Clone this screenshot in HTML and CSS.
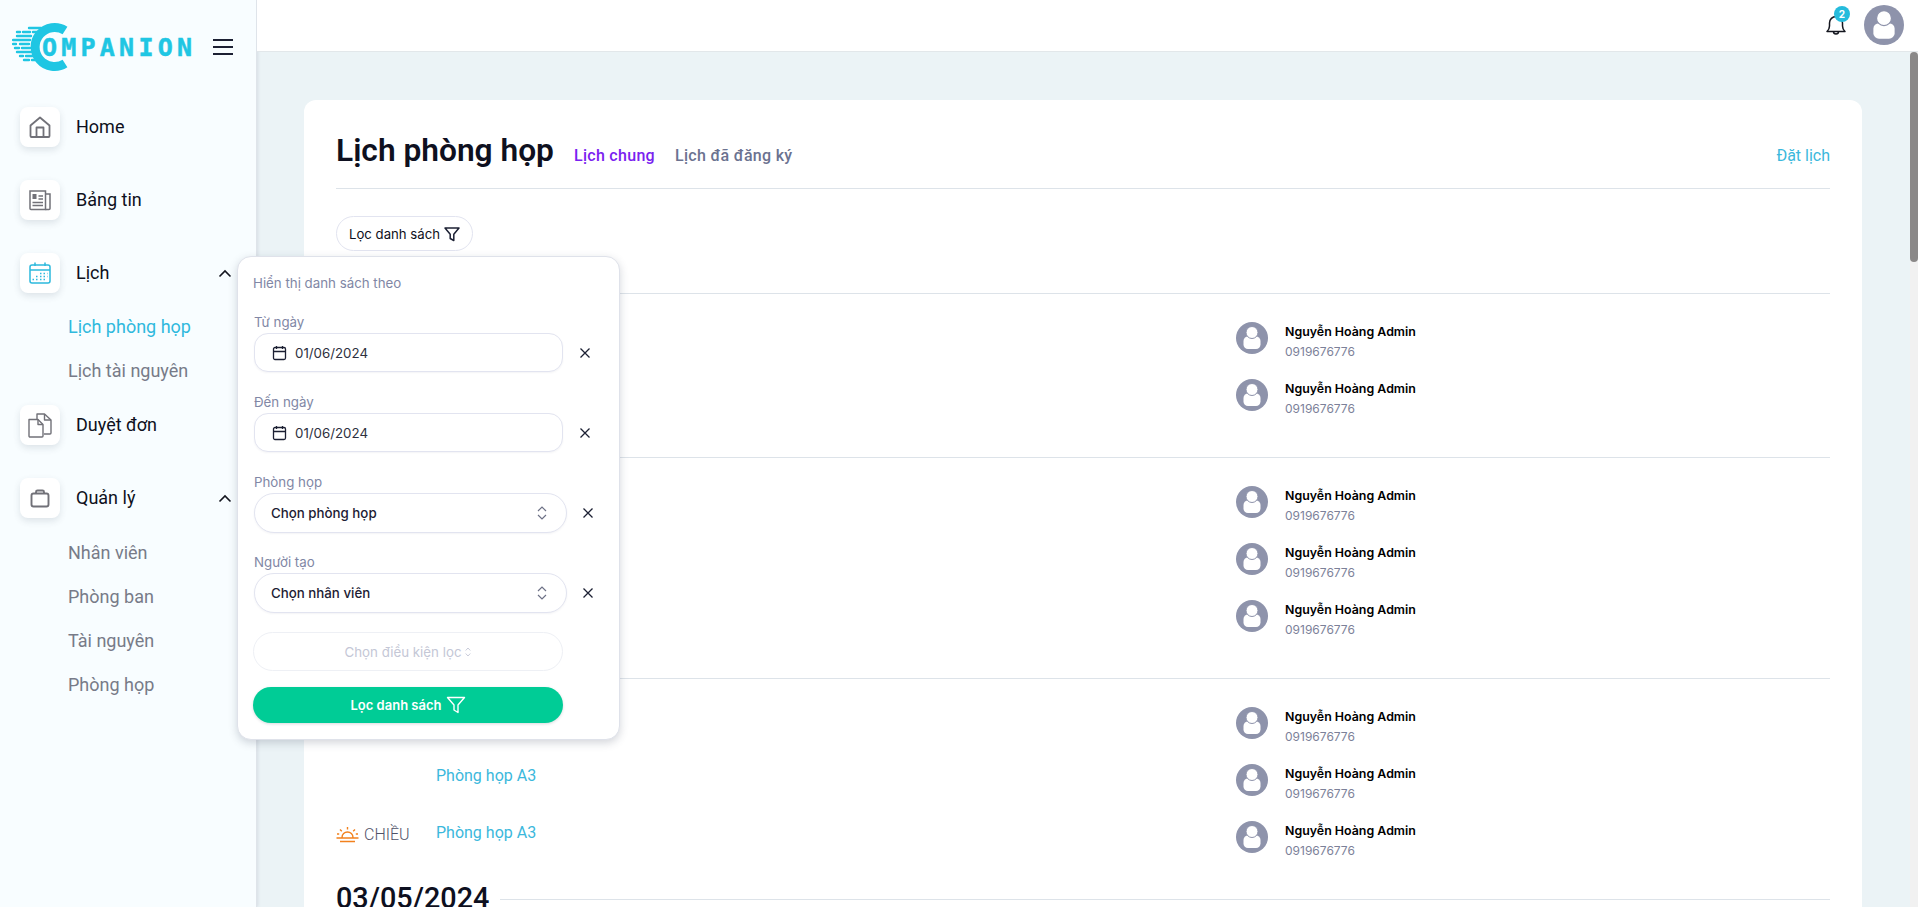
FILE: index.html
```html
<!DOCTYPE html>
<html lang="vi">
<head>
<meta charset="utf-8">
<title>Lịch phòng họp</title>
<link rel="stylesheet" href="styles.css">
</head>
<body>
<div class="shell">
  <aside class="sidebar">
    <div class="brand">
      <svg class="logo" width="184" height="52" viewBox="0 0 184 52">
        <path d="M53 9.500 A19.500 19.500 0 1 0 53 42.500" fill="none" stroke="#1fc6e3" stroke-width="9"/>
        <g stroke="#1fc6e3" stroke-width="2.400" stroke-linecap="round">
          <path d="M17 7h12M5 11h3M11 11h7M21 11h5M5 15h14M1 19h17M1 23h3M8 23h9M3 27h4M10 27h8M5 31h14M8 35h3M14 35h9M12 39h5M20 39h8"/>
        </g>
        <text x="30" y="35" class="logo-text" textLength="150" lengthAdjust="spacing">OMPANION</text>
      </svg>
      <svg class="burger" width="22" height="18" viewBox="0 0 22 18"><path d="M1 2h20M1 9h20M1 16h20" stroke="#1c2033" stroke-width="2" fill="none"/></svg>
    </div>
    <nav class="nav">
      <div class="nav-row">
        <span class="tile"><svg width="24" height="24" viewBox="0 0 24 24" fill="none" stroke="#717178" stroke-width="1.800" stroke-linejoin="round"><path d="M2.500 10.500 12 2.500l9.500 8v10.500a1 1 0 0 1-1 1h-17a1 1 0 0 1-1-1z"/><path d="M8.500 22v-9.500h7V22"/></svg></span>
        <span class="nav-label">Home</span>
      </div>
      <div class="nav-row">
        <span class="tile"><svg width="24" height="24" viewBox="0 0 24 24" fill="none" stroke="#717178" stroke-width="1.500"><path d="M2 3h15.500v18.500H3a1 1 0 0 1-1-1z"/><path d="M17.500 6H22v14.500a1 1 0 0 1-1 1h-3.500"/><path d="M10.500 8h4.500M10.500 11h4.500M4.500 14.500h10.500M4.500 17.500h10.500"/><rect x="4.500" y="6" width="4" height="5" fill="#717178" stroke="none"/></svg></span>
        <span class="nav-label">Bảng tin</span>
      </div>
      <div class="nav-row nav-open">
        <span class="tile"><svg width="24" height="24" viewBox="0 0 24 24" fill="none" stroke="#2db9dd" stroke-width="1.500"><rect x="2" y="4" width="20" height="18" rx="2"/><path d="M2 9h20M7 1.500V5M17 1.500V5"/><path d="M12 12.500h1.500M15.500 12.500h1.500M19 12.500h.5M8 15.500h1.500M12 15.500h1.500M15.500 15.500h1.500M19 15.500h.5M4.500 18.500h1.500M8 18.500h1.500M12 18.500h1.500M15.500 18.500h1.500" stroke-width="1.700"/></svg></span>
        <span class="nav-label">Lịch</span>
        <svg class="chev" width="14" height="9" viewBox="0 0 14 9"><path d="M1.500 7.500 7 2l5.500 5.500" fill="none" stroke="#14161f" stroke-width="1.600"/></svg>
      </div>
      <div class="sub sub-gap">
        <a class="sub-item sub-active">Lịch phòng họp</a>
        <a class="sub-item">Lịch tài nguyên</a>
      </div>
      <div class="nav-row">
        <span class="tile"><svg width="26" height="26" viewBox="0 0 26 26" fill="none" stroke="#717178" stroke-width="1.400" stroke-linejoin="round"><path d="M2 7.500h9l5 5v11.500a1 1 0 0 1-1 1H3a1 1 0 0 1-1-1z"/><path d="M11 7.500v5h5"/><path d="M10 7V2h7.500l6.500 6v13a1 1 0 0 1-1 1h-6"/><path d="M17.500 2v6h6.500"/></svg></span>
        <span class="nav-label">Duyệt đơn</span>
      </div>
      <div class="nav-row nav-open">
        <span class="tile"><svg width="24" height="24" viewBox="0 0 24 24" fill="none" stroke="#717178" stroke-width="1.900"><rect x="3.500" y="7.500" width="17" height="13" rx="2"/><path d="M8 7.500V6a1.500 1.500 0 0 1 1.500-1.500h5A1.500 1.500 0 0 1 16 6v1.500"/></svg></span>
        <span class="nav-label">Quản lý</span>
        <svg class="chev" width="14" height="9" viewBox="0 0 14 9"><path d="M1.500 7.500 7 2l5.500 5.500" fill="none" stroke="#14161f" stroke-width="1.600"/></svg>
      </div>
      <div class="sub sub-low">
        <a class="sub-item">Nhân viên</a>
        <a class="sub-item">Phòng ban</a>
        <a class="sub-item">Tài nguyên</a>
        <a class="sub-item">Phòng họp</a>
      </div>
    </nav>
  </aside>

  <div class="right">
    <header class="topbar">
      <span class="bell">
        <svg width="22" height="24" viewBox="0 0 22 24" fill="none" stroke="#14161f" stroke-width="1.500" stroke-linejoin="round"><path d="M2 18.500c1.800-1.700 2.500-3 2.500-5.500V10a6.500 6.500 0 0 1 13 0v3c0 2.500.7 3.800 2.500 5.500z"/><path d="M8.500 18.500a2.500 2.500 0 0 0 5 0"/></svg>
        <span class="badge">2</span>
      </span>
      <svg class="avatar-top" width="40" height="40" viewBox="0 0 32 32"><circle cx="16" cy="16" r="16" fill="#8e93ab"/><rect x="7.500" y="14.500" width="17" height="12.500" rx="4.500" fill="#fff"/><circle cx="16" cy="10.500" r="6" fill="#fff" stroke="#8e93ab" stroke-width="1"/></svg>
    </header>
    <div class="below">
      <main class="main">
        <section class="card">
          <div class="card-head">
            <h1 class="title">Lịch phòng họp</h1>
            <a class="tab tab-active">Lịch chung</a>
            <a class="tab">Lịch đã đăng ký</a>
            <a class="book">Đặt lịch</a>
          </div>

          <div class="filter-wrap">
            <button class="filter-btn">Lọc danh sách
              <svg width="18" height="18" viewBox="0 0 18 18" fill="none" stroke="#1c2033" stroke-width="1.500" stroke-linejoin="round"><path d="M2 3h14l-5.200 6.300V15.500l-3.600-2V9.300z"/></svg>
            </button>
            <div class="popup">
              <div class="pop-head">Hiển thị danh sách theo</div>
              <label class="pop-label">Từ ngày</label>
              <div class="pop-row">
                <div class="date-input">
                  <svg width="15" height="16" viewBox="0 0 15 16" fill="none" stroke="#1c2033" stroke-width="1.300"><rect x="1.500" y="2.500" width="12" height="12" rx="1.500"/><path d="M1.500 6.500h12M4.500 1v3M10.500 1v3"/></svg>
                  <span>01/06/2024</span>
                </div>
                <svg class="clear" width="12" height="12" viewBox="0 0 12 12"><path d="M1.500 1.500l9 9M10.500 1.500l-9 9" stroke="#1c2033" stroke-width="1.300"/></svg>
              </div>
              <label class="pop-label">Đến ngày</label>
              <div class="pop-row">
                <div class="date-input">
                  <svg width="15" height="16" viewBox="0 0 15 16" fill="none" stroke="#1c2033" stroke-width="1.300"><rect x="1.500" y="2.500" width="12" height="12" rx="1.500"/><path d="M1.500 6.500h12M4.500 1v3M10.500 1v3"/></svg>
                  <span>01/06/2024</span>
                </div>
                <svg class="clear" width="12" height="12" viewBox="0 0 12 12"><path d="M1.500 1.500l9 9M10.500 1.500l-9 9" stroke="#1c2033" stroke-width="1.300"/></svg>
              </div>
              <label class="pop-label">Phòng họp</label>
              <div class="pop-row pop-row-tight">
                <div class="select">
                  <span>Chọn phòng họp</span>
                  <svg width="10" height="14" viewBox="0 0 10 14" fill="none" stroke="#6d7186" stroke-width="1.200"><path d="M1 5l4-4 4 4M1 9l4 4 4-4"/></svg>
                </div>
                <svg class="clear clear-sel" width="12" height="12" viewBox="0 0 12 12"><path d="M1.500 1.500l9 9M10.500 1.500l-9 9" stroke="#1c2033" stroke-width="1.300"/></svg>
              </div>
              <label class="pop-label">Người tạo</label>
              <div class="pop-row pop-row-tight">
                <div class="select">
                  <span>Chọn nhân viên</span>
                  <svg width="10" height="14" viewBox="0 0 10 14" fill="none" stroke="#6d7186" stroke-width="1.200"><path d="M1 5l4-4 4 4M1 9l4 4 4-4"/></svg>
                </div>
                <svg class="clear clear-sel" width="12" height="12" viewBox="0 0 12 12"><path d="M1.500 1.500l9 9M10.500 1.500l-9 9" stroke="#1c2033" stroke-width="1.300"/></svg>
              </div>
              <div class="cond">
                <span>Chọn điều kiện lọc</span>
                <svg width="6" height="10" viewBox="0 0 6 10" fill="none" stroke="#c9ccda" stroke-width="1"><path d="M.7 3.500 3 1l2.300 2.500M.7 6.500 3 9l2.300-2.500"/></svg>
              </div>
              <button class="apply">Lọc danh sách
                <svg width="20" height="20" viewBox="0 0 20 20" fill="none" stroke="#fff" stroke-width="1.400" stroke-linejoin="round"><path d="M1.500 2.500h17l-6.500 7.500v7.500l-4-2.500V10z"/></svg>
              </button>
            </div>
          </div>

          <div class="day day-first">
            <div class="day-head"><span class="day-line"></span></div>
            <div class="row"><span class="sess"></span><span></span><div class="person"><svg class="ava" width="32" height="32" viewBox="0 0 32 32"><circle cx="16" cy="16" r="16" fill="#8e93ab"/><rect x="7.500" y="14.500" width="17" height="12.500" rx="4.500" fill="#fff"/><circle cx="16" cy="10.500" r="6" fill="#fff" stroke="#8e93ab" stroke-width="1"/></svg><div class="pinfo"><div class="pname">Nguyễn Hoàng Admin</div><div class="pphone">0919676776</div></div></div></div>
            <div class="row"><span class="sess"></span><span></span><div class="person"><svg class="ava" width="32" height="32" viewBox="0 0 32 32"><circle cx="16" cy="16" r="16" fill="#8e93ab"/><rect x="7.500" y="14.500" width="17" height="12.500" rx="4.500" fill="#fff"/><circle cx="16" cy="10.500" r="6" fill="#fff" stroke="#8e93ab" stroke-width="1"/></svg><div class="pinfo"><div class="pname">Nguyễn Hoàng Admin</div><div class="pphone">0919676776</div></div></div></div>
          </div>

          <div class="day">
            <div class="day-head"><span class="day-line"></span></div>
            <div class="row"><span class="sess"></span><span></span><div class="person"><svg class="ava" width="32" height="32" viewBox="0 0 32 32"><circle cx="16" cy="16" r="16" fill="#8e93ab"/><rect x="7.500" y="14.500" width="17" height="12.500" rx="4.500" fill="#fff"/><circle cx="16" cy="10.500" r="6" fill="#fff" stroke="#8e93ab" stroke-width="1"/></svg><div class="pinfo"><div class="pname">Nguyễn Hoàng Admin</div><div class="pphone">0919676776</div></div></div></div>
            <div class="row"><span class="sess"></span><span></span><div class="person"><svg class="ava" width="32" height="32" viewBox="0 0 32 32"><circle cx="16" cy="16" r="16" fill="#8e93ab"/><rect x="7.500" y="14.500" width="17" height="12.500" rx="4.500" fill="#fff"/><circle cx="16" cy="10.500" r="6" fill="#fff" stroke="#8e93ab" stroke-width="1"/></svg><div class="pinfo"><div class="pname">Nguyễn Hoàng Admin</div><div class="pphone">0919676776</div></div></div></div>
            <div class="row"><span class="sess"></span><span></span><div class="person"><svg class="ava" width="32" height="32" viewBox="0 0 32 32"><circle cx="16" cy="16" r="16" fill="#8e93ab"/><rect x="7.500" y="14.500" width="17" height="12.500" rx="4.500" fill="#fff"/><circle cx="16" cy="10.500" r="6" fill="#fff" stroke="#8e93ab" stroke-width="1"/></svg><div class="pinfo"><div class="pname">Nguyễn Hoàng Admin</div><div class="pphone">0919676776</div></div></div></div>
          </div>

          <div class="day">
            <div class="day-head"><span class="day-line"></span></div>
            <div class="row"><span class="sess"></span><span></span><div class="person"><svg class="ava" width="32" height="32" viewBox="0 0 32 32"><circle cx="16" cy="16" r="16" fill="#8e93ab"/><rect x="7.500" y="14.500" width="17" height="12.500" rx="4.500" fill="#fff"/><circle cx="16" cy="10.500" r="6" fill="#fff" stroke="#8e93ab" stroke-width="1"/></svg><div class="pinfo"><div class="pname">Nguyễn Hoàng Admin</div><div class="pphone">0919676776</div></div></div></div>
            <div class="row"><span class="sess"></span><a class="room">Phòng họp A3</a><div class="person"><svg class="ava" width="32" height="32" viewBox="0 0 32 32"><circle cx="16" cy="16" r="16" fill="#8e93ab"/><rect x="7.500" y="14.500" width="17" height="12.500" rx="4.500" fill="#fff"/><circle cx="16" cy="10.500" r="6" fill="#fff" stroke="#8e93ab" stroke-width="1"/></svg><div class="pinfo"><div class="pname">Nguyễn Hoàng Admin</div><div class="pphone">0919676776</div></div></div></div>
            <div class="row"><span class="sess"><svg width="23" height="17" viewBox="0 0 23 17" fill="none" stroke="#f2811d" stroke-width="1.400"><path d="M6 11.500a5.500 5.500 0 0 1 11 0M0.500 12h22M4 15.500h15M11.500 1v2.500M4 3.500l1.800 1.800M19 3.500l-1.800 1.800M1 8h2.200M19.800 8H22"/></svg>CHIỀU</span><a class="room">Phòng họp A3</a><div class="person"><svg class="ava" width="32" height="32" viewBox="0 0 32 32"><circle cx="16" cy="16" r="16" fill="#8e93ab"/><rect x="7.500" y="14.500" width="17" height="12.500" rx="4.500" fill="#fff"/><circle cx="16" cy="10.500" r="6" fill="#fff" stroke="#8e93ab" stroke-width="1"/></svg><div class="pinfo"><div class="pname">Nguyễn Hoàng Admin</div><div class="pphone">0919676776</div></div></div></div>
          </div>

          <div class="day">
            <div class="day-head"><span class="day-date">03/05/2024</span><span class="day-line"></span></div>
          </div>
        </section>
      </main>
      <div class="scrollbar"><span class="thumb"></span></div>
    </div>
  </div>
</div>
</body>
</html>
```

FILE: styles.css
```css
* { box-sizing: border-box; }
html, body { margin: 0; height: 100%; overflow: hidden; }
body { font-family: Roboto, "Liberation Sans", sans-serif; color: #0e1020; background: #ebf3f6; }
a { text-decoration: none; }

.shell { display: flex; height: 907px; width: 1918px; overflow: hidden; }

.sidebar { width: 257px; flex: none; background: #f8fdff; border-right: 1px solid #dfe4ea; box-shadow: 1px 0 3px rgba(120,130,150,.18); padding: 0 20px; }
.brand { height: 107px; display: flex; align-items: flex-start; }
.logo { margin: 21px 0 0 -8px; flex: none; }
.logo-text { font-family: "DejaVu Sans Mono", monospace; font-weight: 700; font-size: 25px; fill: #1fc6e3; stroke: #1fc6e3; stroke-width: .5px; }
.burger { margin: 38px 0 0 16px; flex: none; }

.nav { display: flex; flex-direction: column; }
.nav-row { display: flex; align-items: center; height: 40px; margin-bottom: 33px; }
.nav-open { margin-bottom: 0; }
.tile { width: 40px; height: 40px; background: #fff; border-radius: 8px; box-shadow: 0 3px 7px rgba(60,70,90,.14); display: flex; align-items: center; justify-content: center; flex: none; }
.nav-label { margin-left: 16px; font-size: 18px; color: #0e1020; flex: 1; padding-bottom: 2px; }
.chev { margin-right: 4px; }
.sub { padding-top: 12px; display: flex; flex-direction: column; margin-left: 48px; }
.sub-gap { margin-bottom: 12px; }
.sub-low { padding-top: 13px; }
.sub-item { height: 44px; padding-bottom: 2px; display: flex; align-items: center; font-size: 18px; color: #777b88; white-space: nowrap; }
.sub-active { color: #2fb9dd; }

.right { flex: 1; display: flex; flex-direction: column; min-width: 0; position: relative; z-index: 3; }
.topbar { height: 52px; background: #fff; border-bottom: 1px solid #e2e7ea; display: flex; align-items: center; justify-content: flex-end; padding: 0 14px 1px 0; flex: none; }
.bell { position: relative; width: 22px; height: 24px; margin-right: 17px; }
.bell svg { display: block; }
.badge { position: absolute; top: -7px; left: 9px; width: 16px; height: 16px; border-radius: 50%; background: #25bbdc; color: #fff; font-family: Inter, sans-serif; font-size: 10px; font-weight: 700; display: flex; align-items: center; justify-content: center; }

.below { flex: 1; display: flex; min-height: 0; }
.main { flex: 1; padding: 48px 48px 0 47px; min-width: 0; }
.scrollbar { width: 8px; background: #f1f1f1; flex: none; }
.thumb { display: block; height: 210px; background: #8a8888; border-radius: 4px; }

.card { background: #fff; border-radius: 12px; padding: 0 32px 60px; }
.card-head { display: flex; align-items: center; height: 89px; padding-top: 32px; padding-bottom: 19px; border-bottom: 1px solid #dde3e9; }
.title { margin: 0 20px 0 0; font-size: 31.700px; font-weight: 600; color: #0e1020; line-height: 37px; white-space: nowrap; }
.tab { font-size: 16px; letter-spacing: .3px; font-weight: 500; color: #6b7290; margin-right: 20px; margin-top: 10px; white-space: nowrap; }
.tab-active { color: #7a22f0; }
.book { margin-left: auto; margin-top: 10px; font-size: 16px; color: #3bb8dc; }

.filter-wrap { position: relative; margin-top: 27px; height: 35px; }
.filter-btn { display: inline-flex; align-items: center; gap: 3px; height: 35px; width: 137px; justify-content: center; padding: 0 0 0 1px; background: #fff; border: 1px solid #e2e4f0; border-radius: 18px; font-family: Inter, sans-serif; font-size: 13.200px; color: #0e1020; }
.popup { position: absolute; left: -99px; top: 40px; width: 383px; height: 484px; background: #fff; border: 1px solid #dfe2ea; border-radius: 14px; box-shadow: 0 3px 8px rgba(60,70,90,.22); padding: 16px 16px 0 15px; z-index: 5; font-family: Inter, sans-serif; }
.pop-head { font-size: 13.300px; line-height: 18px; padding-top: 1px; color: #8187a5; margin-bottom: 20px; }
.pop-label { display: block; font-size: 13.300px; line-height: 18px; padding: 1px 0 0 1px; color: #8187a5; margin-bottom: 2px; }
.pop-row { display: flex; align-items: center; margin-bottom: 20px; padding-left: 1px; }
.pop-row-tight { margin-bottom: 19px; }
.date-input { width: 309px; height: 39px; border: 1px solid #e2e4f0; border-radius: 14px; display: flex; align-items: center; padding-left: 17px; gap: 8px; font-size: 13.300px; color: #2d3040; box-shadow: 0 1px 2px rgba(60,70,110,.06); background: #fff; }
.date-input svg { flex: none; }
.clear { margin-left: 16px; flex: none; }
.clear-sel { margin-left: 15px; }
.select { width: 313px; height: 40px; border: 1px solid #e2e4f0; border-radius: 20px; display: flex; align-items: center; justify-content: space-between; padding: 0 19px 0 16px; font-size: 13.300px; font-weight: 500; color: #1c2033; box-shadow: 0 1px 2px rgba(60,70,110,.06); background: #fff; }
.cond { width: 310px; height: 39px; border: 1px solid #eef0f5; border-radius: 20px; display: flex; align-items: center; justify-content: center; gap: 4px; font-size: 13.300px; color: #c4c7d6; }
.apply { margin-top: 16px; width: 310px; height: 36px; border: 0; border-radius: 18px; background: #00cc96; color: #fff; font-family: Inter, sans-serif; font-size: 13px; font-weight: 600; display: flex; align-items: center; justify-content: center; gap: 4px; padding: 0; box-shadow: 0 1px 3px rgba(60,70,90,.2); }

.day { margin-top: 18px; }
.day-first { margin-top: 26px; }
.day-head { display: flex; align-items: center; height: 32px; gap: 11px; }
.day-date { font-size: 28.800px; font-weight: 500; color: #0e1020; white-space: nowrap; line-height: 32px; margin-top: -3px; }
.day-line { flex: 1; height: 1px; background: #dde3e9; }
.row { display: grid; grid-template-columns: 100px 800px 1fr; align-items: center; height: 57px; }
.sess { display: flex; align-items: center; gap: 5px; font-size: 16px; font-weight: 300; color: #4f5268; padding-bottom: 4px; }
.room { font-size: 16px; color: #3bb8dc; padding-bottom: 8px; }
.person { display: flex; align-items: center; gap: 17px; }
.ava { flex: none; }
.pinfo { padding-top: 9px; }
.pname { font-family: Inter, sans-serif; font-size: 12.400px; font-weight: 600; line-height: 18px; color: #000; }
.pphone { font-family: Inter, sans-serif; font-size: 12px; line-height: 20px; padding-top: 1px; color: #7c8199; }
```
